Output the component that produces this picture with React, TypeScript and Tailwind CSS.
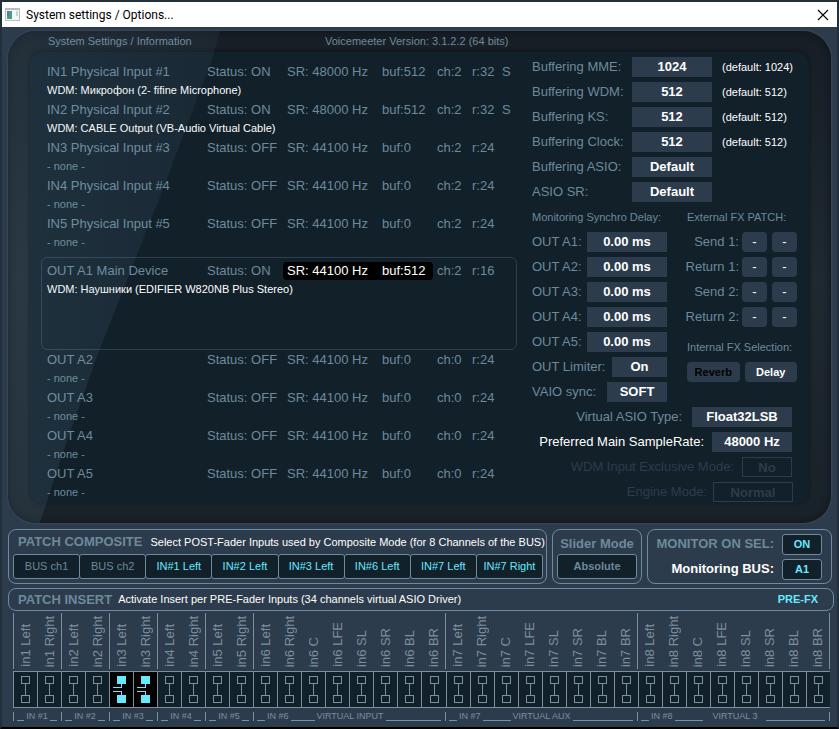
import { useState } from "react";
import type { ReactNode } from "react";
import clsx from "clsx";

type Device = {
  name: string;
  wdm: string | null;
  on: boolean;
  rate: number;
  buf: number;
  ch: number;
  res: number;
  shared?: boolean;
};

const INPUTS: Device[] = [
  { name: "IN1 Physical Input #1", wdm: "WDM: Микрофон (2- fifine Microphone)", on: true, rate: 48000, buf: 512, ch: 2, res: 32, shared: true },
  { name: "IN2 Physical Input #2", wdm: "WDM: CABLE Output (VB-Audio Virtual Cable)", on: true, rate: 48000, buf: 512, ch: 2, res: 32, shared: true },
  { name: "IN3 Physical Input #3", wdm: null, on: false, rate: 44100, buf: 0, ch: 2, res: 24 },
  { name: "IN4 Physical Input #4", wdm: null, on: false, rate: 44100, buf: 0, ch: 2, res: 24 },
  { name: "IN5 Physical Input #5", wdm: null, on: false, rate: 44100, buf: 0, ch: 2, res: 24 },
];

const MAIN_OUT: Device = {
  name: "OUT A1 Main Device",
  wdm: "WDM: Наушники (EDIFIER W820NB Plus Stereo)",
  on: true,
  rate: 44100,
  buf: 512,
  ch: 2,
  res: 16,
};

const OUTPUTS: Device[] = ["OUT A2", "OUT A3", "OUT A4", "OUT A5"].map((name) => ({
  name,
  wdm: null,
  on: false,
  rate: 44100,
  buf: 0,
  ch: 0,
  res: 24,
}));

const BUFFERING = [
  { id: "mme", label: "Buffering MME:", value: "1024", hint: "(default: 1024)" },
  { id: "wdm", label: "Buffering WDM:", value: "512", hint: "(default: 512)" },
  { id: "ks", label: "Buffering KS:", value: "512", hint: "(default: 512)" },
  { id: "clock", label: "Buffering Clock:", value: "512", hint: "(default: 512)" },
  { id: "asio", label: "Buffering ASIO:", value: "Default", hint: "" },
  { id: "asio-sr", label: "ASIO SR:", value: "Default", hint: "" },
];

const DELAYS = ["A1", "A2", "A3", "A4", "A5"];
const FX_PATCH = ["Send 1:", "Return 1:", "Send 2:", "Return 2:"];

const COMPOSITE = [
  { label: "BUS ch1", active: false },
  { label: "BUS ch2", active: false },
  { label: "IN#1 Left", active: true },
  { label: "IN#2 Left", active: true },
  { label: "IN#3 Left", active: true },
  { label: "IN#6 Left", active: true },
  { label: "IN#7 Left", active: true },
  { label: "IN#7 Right", active: true },
];

const STEREO = ["Left", "Right"];
const SURROUND = ["Left", "Right", "C", "LFE", "SL", "SR", "BL", "BR"];

const GROUPS = [
  { n: 1, channels: STEREO },
  { n: 2, channels: STEREO },
  { n: 3, channels: STEREO },
  { n: 4, channels: STEREO },
  { n: 5, channels: STEREO },
  { n: 6, channels: SURROUND, title: "VIRTUAL INPUT", line: "w-6" },
  { n: 7, channels: SURROUND, title: "VIRTUAL AUX", line: "w-7" },
  { n: 8, channels: SURROUND, title: "VIRTUAL 3", line: "w-7 mr-2", spaced: true },
];

const STRIPS = GROUPS.flatMap((g) =>
  g.channels.map((ch, i) => ({ name: `in${g.n} ${ch}`, first: i === 0 }))
);

function DeviceRow({ device, main }: { device: Device; main?: boolean }) {
  return (
    <div className="h-[38px]">
      <div className="flex h-5 items-center whitespace-nowrap text-[13px]">
        <span className="w-40">{device.name}</span>
        <span className="w-19">Status: {device.on ? "ON" : "OFF"}</span>
        <span className={clsx("flex h-[18px] w-[150px] items-center rounded pl-1", main && "bg-black text-white")}>
          <span className="w-[95px]">SR: {device.rate} Hz</span>
          <span>buf:{device.buf}</span>
        </span>
        <span className="ml-1 w-[35px]">ch:{device.ch}</span>
        <span className="w-[30px]">r:{device.res}</span>
        {device.shared && <span>S</span>}
      </div>
      <p className={clsx("text-[11px] leading-[17px]", device.wdm && "text-white")}>{device.wdm ?? "- none -"}</p>
    </div>
  );
}

function Value({ id, className, children }: { id: string; className: string; children: ReactNode }) {
  return (
    <button id={id} type="button" className={clsx("h-5 shrink-0 bg-[#2d3c4c] text-[13px] text-white", className)}>
      {children}
    </button>
  );
}

function InsertIcon({ active }: { active: boolean }) {
  if (active) {
    return (
      <svg width="23" height="35" viewBox="0 0 23 35" fill="none" stroke="#67e8ff" shapeRendering="crispEdges">
        <path d="M7 4h9v8H7zM7 23h9v8H7z" fill="#67e8ff" stroke="none" />
        <path d="M11.5 12v3.5H3M11.5 23v-3.5H3" />
      </svg>
    );
  }
  return (
    <svg width="23" height="35" viewBox="0 0 23 35" fill="none" stroke="#7b909e" shapeRendering="crispEdges">
      <path d="M7.5 4.5h8v7h-8zM7.5 23.5h8v7h-8zM11.5 12v11" />
    </svg>
  );
}

function Panel({ className, children }: { className?: string; children: ReactNode }) {
  return <section className={clsx("rounded-lg border border-[#6d8a9e]", className)}>{children}</section>;
}

export default function App() {
  const [inserts, setInserts] = useState<string[]>(["in3 Left", "in3 Right"]);
  const [fx, setFx] = useState("Delay");

  const toggleInsert = (name: string) =>
    setInserts((prev) => (prev.includes(name) ? prev.filter((n) => n !== name) : [...prev, name]));

  return (
    <div className="min-h-screen border-2 border-[#22303c] border-b-black bg-[#2d3c4c] font-['Liberation_Sans',Arial,sans-serif] text-[#6c8a9b]">
      <header className="flex h-[25px] items-center bg-white pr-2 pl-[3px] text-black">
        <svg width="15" height="13" viewBox="0 0 15 13" shapeRendering="crispEdges">
          <path d="M0 0h15v13H0z" fill="#b9bec6" />
          <path d="M1 2h13v10H1z" fill="#f4f6f8" />
          <path d="M2 3h5v8H2z" fill="#4f9a86" />
          <path d="M2 3h2v5H2z" fill="#4b7fa6" />
          <path d="M11 3h2v5h-2z" fill="#b9dcc6" />
        </svg>
        <h1 className="ml-1.5 flex-1 font-[Roboto,sans-serif] text-xs">System settings / Options...</h1>
        <button type="button" aria-label="Close">
          <svg width="12" height="12" viewBox="0 0 12 12" stroke="#000" strokeWidth="1.1">
            <path d="M1 1l10 10M11 1L1 11" />
          </svg>
        </button>
      </header>

      <main>
        <div className="px-1.5 pt-1">
          <div className="relative overflow-hidden rounded-[28px] bg-linear-to-b from-[#171e25] via-[#1f292f] to-[#1a2229] px-[22px] pb-[19px] shadow-[0_0_2px_1px_#35485a,inset_0_0_6px_1px_#10161c]">
            <div className="grid h-[21px] grid-cols-[277px_1fr] items-center pl-[18px] text-[11px]">
              <h2>System Settings / Information</h2>
              <p>Voicemeeter Version: 3.1.2.2 (64 bits)</p>
            </div>

            <div className="flex gap-[15px] rounded-xl bg-[#12202a] pr-3 pb-0.5 pl-[11px] shadow-[0_-1px_3px_1px_#10181f]">
              <div className="min-w-0 flex-1 pt-2.5">
                <div className="px-1.5">
                  {INPUTS.map((d) => (
                    <DeviceRow key={d.name} device={d} />
                  ))}
                </div>
                <div className="mt-[5px] h-[93px] rounded-md border border-[#2d3f4e] px-[5px] pt-[3px]">
                  <DeviceRow device={MAIN_OUT} main />
                </div>
                <div className="px-1.5">
                  {OUTPUTS.map((d) => (
                    <DeviceRow key={d.name} device={d} />
                  ))}
                </div>
              </div>

              <div className="flex w-[265px] shrink-0 flex-col gap-[5px] pt-[5px] text-[13px] whitespace-nowrap">
                {BUFFERING.map((b) => (
                  <div key={b.id} className="flex h-5 items-center">
                    <label htmlFor={b.id} className="w-[100px]">{b.label}</label>
                    <Value id={b.id} className="w-20 font-bold">{b.value}</Value>
                    <span className="ml-2.5 text-[11px] text-white">{b.hint}</span>
                  </div>
                ))}

                <div className="flex gap-5">
                  <div className="flex w-[135px] flex-col gap-[5px]">
                    <h3 className="text-[11px] leading-5">Monitoring Synchro Delay:</h3>
                    {DELAYS.map((d) => (
                      <div key={d} className="flex items-center justify-between">
                        <label htmlFor={`delay-${d}`}>OUT {d}:</label>
                        <Value id={`delay-${d}`} className="w-20 font-bold">0.00 ms</Value>
                      </div>
                    ))}
                    <div className="flex items-center justify-between">
                      <label htmlFor="limiter">OUT Limiter:</label>
                      <Value id="limiter" className="w-[55px] font-bold">On</Value>
                    </div>
                    <div className="flex items-center justify-between">
                      <label htmlFor="vaio">VAIO sync:</label>
                      <Value id="vaio" className="w-15 font-bold">SOFT</Value>
                    </div>
                  </div>

                  <div className="flex w-[110px] flex-col gap-[5px]">
                    <h3 className="text-[11px] leading-5">External FX PATCH:</h3>
                    {FX_PATCH.map((label) => (
                      <div key={label} className="flex items-center justify-end gap-[5px]">
                        <label htmlFor={`${label}-l`} className="-mr-0.5">{label}</label>
                        <Value id={`${label}-l`} className="w-[25px] rounded">-</Value>
                        <Value id={`${label}-r`} className="w-[25px] rounded">-</Value>
                      </div>
                    ))}
                    <h3 className="mt-[5px] text-[11px] leading-5">Internal FX Selection:</h3>
                    <div className="grid grid-cols-2 gap-[5px]">
                      {["Reverb", "Delay"].map((name) => (
                        <button
                          key={name}
                          type="button"
                          aria-pressed={fx === name}
                          onClick={() => setFx(name)}
                          className={clsx("h-5 rounded bg-[#2d3c4c] text-[11px] font-bold", fx === name ? "text-white" : "text-black")}
                        >
                          {name}
                        </button>
                      ))}
                    </div>
                  </div>
                </div>

                <div className="flex items-center justify-end gap-2.5 pr-[5px]">
                  <label htmlFor="asio-type">Virtual ASIO Type:</label>
                  <Value id="asio-type" className="w-25 font-bold">Float32LSB</Value>
                </div>
                <div className="flex items-center justify-end gap-2 pr-[5px]">
                  <label htmlFor="main-rate" className="text-white">Preferred Main SampleRate:</label>
                  <Value id="main-rate" className="w-20 font-bold">48000 Hz</Value>
                </div>
                <div className="flex items-center justify-end gap-2 pr-[5px] text-[#2d3c4c]">
                  <label htmlFor="exclusive">WDM Input Exclusive Mode:</label>
                  <button id="exclusive" type="button" disabled className="h-5 w-[50px] border border-[#2d3c4c] font-bold">No</button>
                </div>
                <div className="flex items-center justify-end gap-1.5 pr-1 text-[#2d3c4c]">
                  <label htmlFor="engine">Engine Mode:</label>
                  <button id="engine" type="button" disabled className="h-5 w-20 border border-[#2d3c4c] font-bold">Normal</button>
                </div>
              </div>
            </div>

            {/* glass reflection */}
            <div className="pointer-events-none absolute inset-y-0 left-0 w-[212px] bg-linear-to-r from-[#7fb0d0]/12 to-[#7fb0d0]/6 [clip-path:polygon(0_0,100%_0,96%_6%,75%_30%,64%_42%,43%_65%,28%_83%,15%_100%,0_100%)]" />
          </div>
        </div>

        <div className="mt-1.5 flex gap-[5px] pr-[5px] pl-1.5">
          <Panel className="h-[55px] min-w-0 flex-1 px-1">
            <div className="flex h-6 items-center gap-2 pl-[5px] whitespace-nowrap">
              <h2 className="text-[13px] font-bold">PATCH COMPOSITE</h2>
              <p className="text-[11px] text-white">
                Select POST-Fader Inputs used by Composite Mode (for 8 Channels of the BUS)
              </p>
            </div>
            <div className="grid grid-cols-8">
              {COMPOSITE.map((c) => (
                <button
                  key={c.label}
                  type="button"
                  className={clsx(
                    "-mr-px h-[25px] rounded-[3px] border border-[#6d8a9e] bg-[#12202a] text-[11px]",
                    c.active && "text-[#67e8ff]"
                  )}
                >
                  {c.label}
                </button>
              ))}
            </div>
          </Panel>

          <Panel className="h-[55px] w-[90px] px-1 text-center">
            <h2 id="slider-mode" className="text-[13px] leading-[27px] font-bold whitespace-nowrap">Slider Mode</h2>
            <button
              type="button"
              aria-describedby="slider-mode"
              className="-mt-[3px] block h-[25px] w-full rounded-[3px] border border-[#6d8a9e] bg-[#12202a] text-[11px] font-bold"
            >
              Absolute
            </button>
          </Panel>

          <Panel className="flex h-[55px] w-[185px] flex-col justify-center gap-1 pr-[9px] text-[13px] font-bold whitespace-nowrap">
            <div className="flex items-center justify-end gap-2">
              <label htmlFor="monitor-sel">MONITOR ON SEL:</label>
              <button id="monitor-sel" type="button" className="h-[21px] w-10 rounded-[3px] border border-[#6d8a9e] bg-[#12202a] text-[11px] text-[#67e8ff]">
                ON
              </button>
            </div>
            <div className="flex items-center justify-end gap-2">
              <label htmlFor="monitor-bus" className="text-white">Monitoring BUS:</label>
              <button id="monitor-bus" type="button" className="h-[21px] w-10 rounded-[3px] border border-[#6d8a9e] bg-[#12202a] text-[11px] text-[#67e8ff]">
                A1
              </button>
            </div>
          </Panel>
        </div>

        <div className="mt-1 pr-[3px] pl-1.5">
          <Panel className="flex h-[23px] items-center gap-1.5 pr-[15px] pl-[9px] whitespace-nowrap">
            <h2 className="text-[13px] font-bold">PATCH INSERT</h2>
            <p className="flex-1 text-[11px] text-white">
              Activate Insert per PRE-Fader Inputs (34 channels virtual ASIO Driver)
            </p>
            <button type="button" className="text-[11px] font-bold text-[#67e8ff]">PRE-FX</button>
          </Panel>
        </div>

        <div className="pt-0.5 pr-[7px] pb-1.5 pl-[11px] text-[#7b909e]">
          <div className="grid h-14 grid-cols-[repeat(34,minmax(0,1fr))] border-r border-[#7b909e]">
            {STRIPS.map((s) => (
              <div key={s.name} className={clsx("flex items-end justify-center border-l pb-0.5", s.first ? "border-[#7b909e]" : "border-transparent")}>
                <span className="rotate-180 text-[13px] leading-[18px] whitespace-nowrap [writing-mode:vertical-rl]">
                  {s.name}
                </span>
              </div>
            ))}
          </div>
          <div className="mt-0.5 grid grid-cols-[repeat(34,minmax(0,1fr))] border-y border-[#7b909e]">
            {STRIPS.map((s) => {
              const active = inserts.includes(s.name);
              return (
                <button
                  key={s.name}
                  type="button"
                  aria-label={s.name}
                  aria-pressed={active}
                  onClick={() => toggleInsert(s.name)}
                  className={clsx("flex h-[35px] justify-center border-l border-[#7b909e]", active ? "bg-black" : "bg-[#12202a]")}
                >
                  <InsertIcon active={active} />
                </button>
              );
            })}
          </div>
          <div className="mt-1 grid h-[9px] grid-cols-[repeat(34,minmax(0,1fr))] border-r border-[#7b909e] text-[9px] leading-[9px] whitespace-nowrap">
            {GROUPS.map((g) => (
              <div
                key={g.n}
                className={clsx("flex gap-0.5 border-l border-[#7b909e] pr-1 pl-[3px]", g.title ? "col-span-8" : "col-span-2")}
              >
                <span className={clsx("border-b border-[#7b909e]", g.title ? "w-2" : "flex-1")} />
                <span>IN #{g.n}</span>
                {g.title && (
                  <>
                    <span className={clsx("border-b border-[#7b909e]", g.line)} />
                    <span className={clsx(g.spaced && "mr-1.5")}>{g.title}</span>
                  </>
                )}
                <span className="flex-1 border-b border-[#7b909e]" />
              </div>
            ))}
          </div>
        </div>
      </main>
    </div>
  );
}
